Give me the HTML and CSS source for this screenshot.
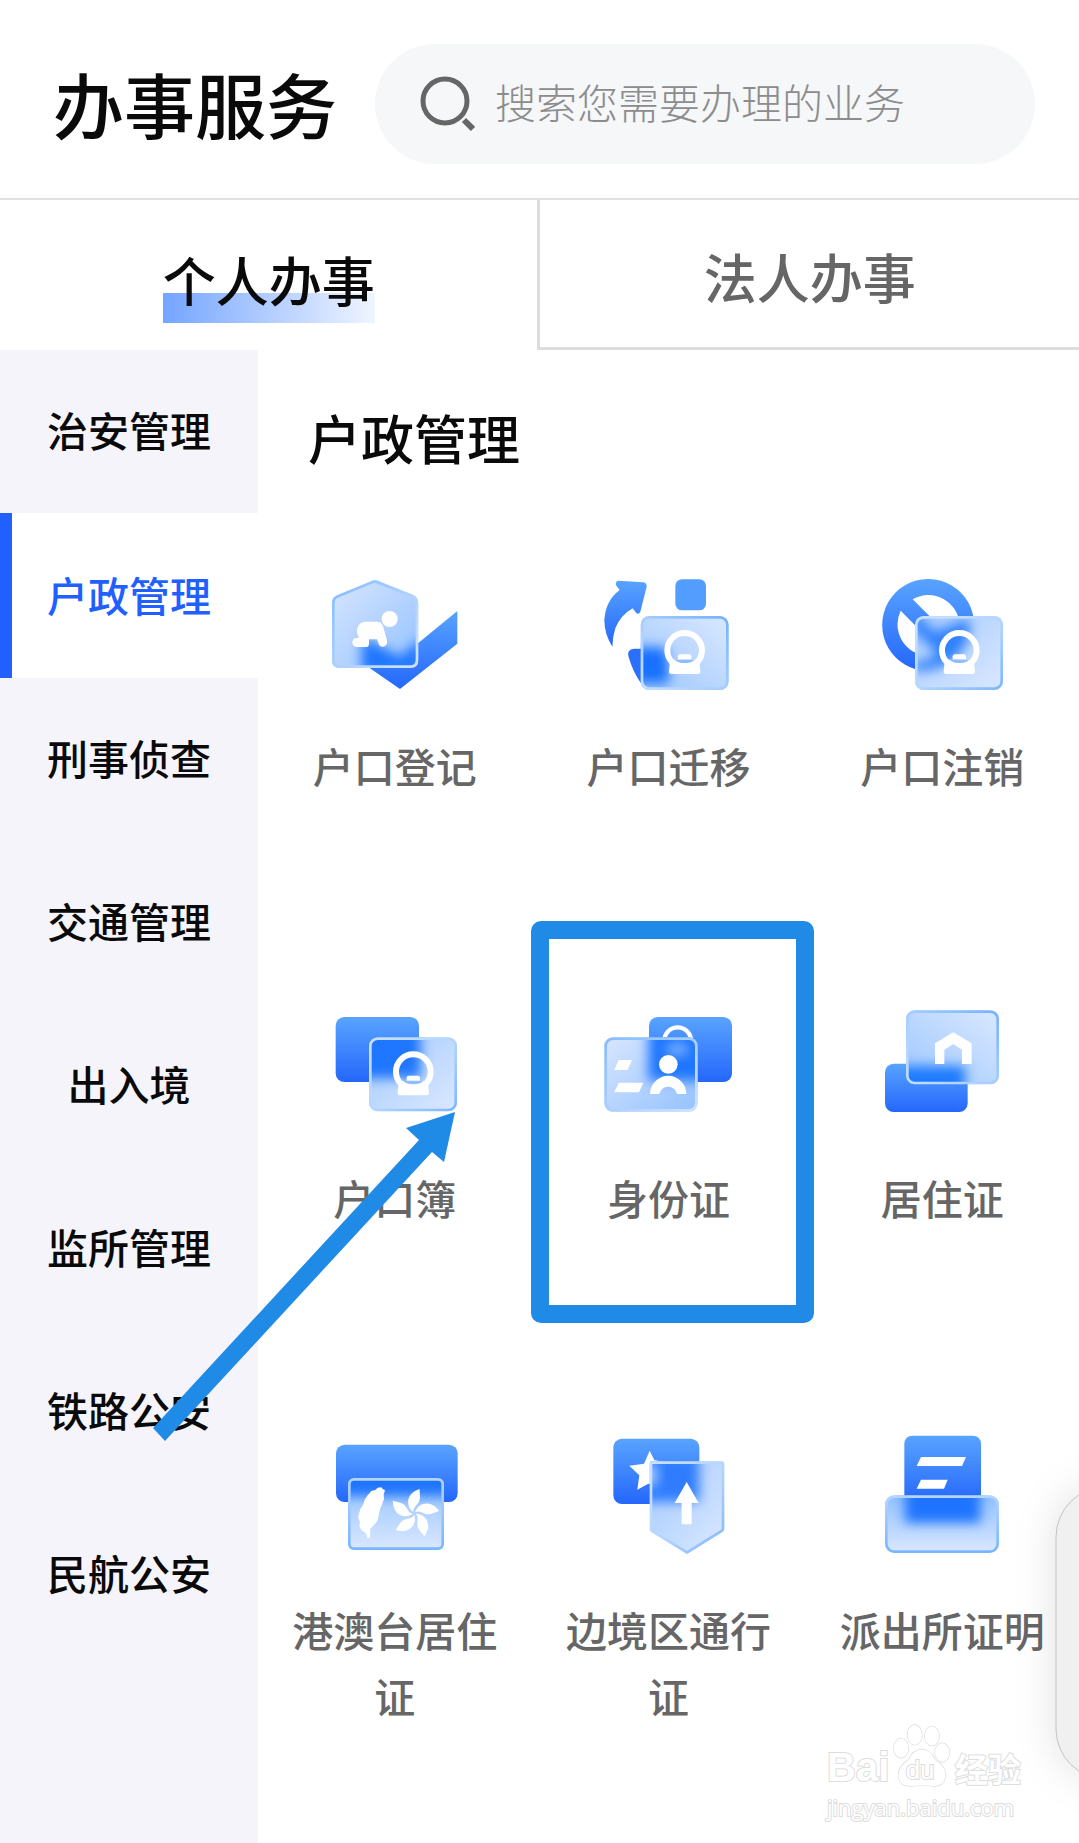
FILE: index.html
```html
<!DOCTYPE html>
<html lang="zh-CN">
<head>
    <meta charset="UTF-8">
    <meta name="viewport" content="width=device-width, initial-scale=1.0">
    <title>办事服务</title>
    <link rel="stylesheet" href="styles.css">
</head>
<body>
    <!-- Shared icon parts -->
    <svg class="defs" aria-hidden="true">
        <defs>
            <linearGradient id="solid" x1="0" y1="0" x2="0" y2="1">
                <stop offset="0" stop-color="#59a3ff"/>
                <stop offset="1" stop-color="#2467fb"/>
            </linearGradient>
            <linearGradient id="glassR" x1="0" y1="1" x2="1" y2="0">
                <stop offset="0" stop-color="#9cc7ff"/>
                <stop offset="1" stop-color="#dbe8ff"/>
            </linearGradient>
            <linearGradient id="glassD" x1="0" y1="0" x2="1" y2="1">
                <stop offset="0" stop-color="#a3caff"/>
                <stop offset="1" stop-color="#dbe8ff"/>
            </linearGradient>
            <linearGradient id="glassL" x1="0" y1="0" x2="1" y2="1">
                <stop offset="0" stop-color="#d8e6ff"/>
                <stop offset="1" stop-color="#94c2ff"/>
            </linearGradient>
            <linearGradient id="glassB" x1="0" y1="0" x2="0" y2="1">
                <stop offset="0" stop-color="#8fc0ff"/>
                <stop offset="1" stop-color="#dbe8ff"/>
            </linearGradient>
            <linearGradient id="edgeD" x1="0" y1="0" x2="1" y2="1">
                <stop offset="0" stop-color="#c9e0ff"/>
                <stop offset="0.5" stop-color="#b5d6ff"/>
                <stop offset="1" stop-color="#7db7ff"/>
            </linearGradient>
            <linearGradient id="edgeU" x1="0" y1="1" x2="1" y2="0">
                <stop offset="0" stop-color="#c4ddff"/>
                <stop offset="0.5" stop-color="#a5cdff"/>
                <stop offset="1" stop-color="#75b3ff"/>
            </linearGradient>
            <linearGradient id="edgeL" x1="0" y1="0" x2="1" y2="1">
                <stop offset="0" stop-color="#85bcff"/>
                <stop offset="1" stop-color="#cfe3ff"/>
            </linearGradient>
            <linearGradient id="edgeB" x1="0" y1="0" x2="0" y2="1">
                <stop offset="0" stop-color="#b5d4ff"/>
                <stop offset="1" stop-color="#78b6ff"/>
            </linearGradient>
            <filter id="blur" x="-50%" y="-50%" width="200%" height="200%" color-interpolation-filters="sRGB">
                <feGaussianBlur stdDeviation="18"/>
            </filter>
            <g id="portrait">
                <circle r="52" fill="none" stroke="#fff" stroke-width="18"/>
                <path d="M-43 28H43L47 62Q48 71 39 71H-39Q-48 71-47 62Z" fill="#fff"/>
                <path d="M-30 28H30Q20 38 0 38T-30 28Z" fill="#8fbcff"/>
                <path d="M-20 27V18Q-20 12-13 12H13Q20 12 20 18V27Z" fill="#fff"/>
            </g>
        </defs>
    </svg>

    <header class="header">
        <h1>办事服务</h1>
        <label class="search">
            <svg class="search-icon" viewBox="0 0 60 60" aria-hidden="true">
                <circle cx="30" cy="27" r="22" fill="none" stroke="#666" stroke-width="5"/>
                <path d="M49 46L58 55" stroke="#666" stroke-width="6"/>
            </svg>
            <input type="text" placeholder="搜索您需要办理的业务" aria-label="搜索">
        </label>
    </header>

    <nav class="tabs">
        <button class="tab active"><span>个人办事</span></button>
        <button class="tab"><span>法人办事</span></button>
    </nav>

    <div class="body">
        <nav class="sidebar">
            <a href="#">治安管理</a>
            <a href="#" class="active">户政管理</a>
            <a href="#">刑事侦查</a>
            <a href="#">交通管理</a>
            <a href="#">出入境</a>
            <a href="#">监所管理</a>
            <a href="#">铁路公安</a>
            <a href="#">民航公安</a>
        </nav>

        <main class="content">
            <h2>户政管理</h2>
            <div class="grid">
                <a href="#" class="item">
                    <svg viewBox="0 0 510 450">
                        <clipPath id="c1"><path d="M66 130Q66 112 82 106L182 64Q195 58 208 64L308 104Q325 112 325 130V300Q325 324 301 324H90Q66 324 66 300Z"/></clipPath>
                        <path d="M180 325L270 387L442 251V153L270 294L225 264Z" fill="url(#solid)"/>
                        <g clip-path="url(#c1)">
                            <path d="M66 50H326V324H66Z" fill="url(#glassL)"/>
                            <path d="M155 235L195 250L270 290L335 235V340H155Z" fill="#1f76ff" filter="url(#blur)"/>
                        </g>
                        <path d="M70 130Q70 114 84 109L184 68Q195 62 206 68L306 108Q321 114 321 130V300Q321 320 301 320H90Q70 320 70 300Z" fill="none" stroke="url(#edgeL)" stroke-width="8"/>
                        <circle cx="239" cy="177" r="24" fill="#fff"/>
                        <path d="M167 185H203Q215 186 219 199L231 241Q234 256 220 260Q208 261 205 249L201 238H177V251Q177 261 167 261H139Q127 259 127 247Q128 234 141 233H147Q138 218 142 204Q149 185 167 185Z" fill="#fff"/>
                    </svg>
                    <span>户口登记</span>
                </a>
                <a href="#" class="item">
                    <svg viewBox="-21 0 510 450">
                        <clipPath id="c2"><rect x="152" y="168" width="264" height="222" rx="26"/></clipPath>
                        <path d="M84 62L160 67Q171 69 170 80L151 155Q146 166 138 158L128 145Q91 166 76 205Q68 230 67 260Q43 222 43 180Q47 121 89 90L78 76Q75 66 84 62Z" fill="url(#solid)"/>
                        <rect x="256" y="58" width="92" height="93" rx="20" fill="#539dff"/>
                        <path d="M160 266H132Q109 268 116 291Q128 335 155 373H180Z" fill="#2b70fa"/>
                        <g clip-path="url(#c2)">
                            <rect x="152" y="168" width="264" height="222" fill="url(#glassR)"/>
                            <path d="M120 262H225Q240 310 235 370H120Z" fill="#1870ff" filter="url(#blur)"/>
                        </g>
                        <rect x="156" y="172" width="256" height="214" rx="22" fill="none" stroke="url(#edgeU)" stroke-width="8"/>
                        <use href="#portrait" x="284" y="271"/>
                    </svg>
                    <span>户口迁移</span>
                </a>
                <a href="#" class="item">
                    <svg viewBox="-24 0 510 450">
                        <clipPath id="c3"><rect x="150" y="168" width="264" height="222" rx="26"/></clipPath>
                        <path fill-rule="evenodd" d="M190 57A138 138 0 1 1 189 57ZM143 118L266 241Q284 218 284 195A94 94 0 0 0 143 118ZM107 152A94 94 0 0 0 232 278Z" fill="url(#solid)"/>
                        <g clip-path="url(#c3)">
                            <rect x="150" y="168" width="264" height="222" fill="url(#glassD)"/>
                            <path d="M140 150L210 215L310 175Q325 240 278 285Q230 340 140 330V305Q185 310 215 280L140 205Z" fill="#2f80ff" filter="url(#blur)"/>
                        </g>
                        <rect x="154" y="172" width="256" height="214" rx="22" fill="none" stroke="url(#edgeD)" stroke-width="8"/>
                        <use href="#portrait" x="283" y="271"/>
                    </svg>
                    <span>户口注销</span>
                </a>

                <a href="#" class="item">
                    <svg viewBox="-30 -24 510 450">
                        <clipPath id="c4"><rect x="147" y="112" width="264" height="222" rx="26"/></clipPath>
                        <rect x="47" y="51" width="250" height="195" rx="26" fill="url(#solid)"/>
                        <g clip-path="url(#c4)">
                            <rect x="147" y="112" width="264" height="222" fill="url(#glassD)"/>
                            <path d="M90 60H302V235H90Z" fill="#1f76ff" filter="url(#blur)"/>
                        </g>
                        <rect x="151" y="116" width="256" height="214" rx="22" fill="none" stroke="url(#edgeD)" stroke-width="8"/>
                        <use href="#portrait" x="280" y="215"/>
                    </svg>
                    <span>户口簿</span>
                </a>
                <a href="#" class="item marked">
                    <svg viewBox="189 246 510 450">
                        <clipPath id="c5"><rect x="253" y="382" width="280" height="223" rx="26"/></clipPath>
                        <rect x="387" y="321" width="249" height="195" rx="26" fill="url(#solid)"/>
                        <path d="M433 392A40 40 0 0 1 513 392" fill="none" stroke="#fff" stroke-width="13"/>
                        <g clip-path="url(#c5)">
                            <rect x="253" y="382" width="280" height="223" fill="url(#glassL)"/>
                            <path d="M385 350H570V512H385Z" fill="#1f76ff" filter="url(#blur)"/>
                            <ellipse cx="472" cy="418" rx="34" ry="20" fill="#7db2ff" filter="url(#blur)"/>
                        </g>
                        <rect x="257" y="386" width="272" height="215" rx="22" fill="none" stroke="url(#edgeL)" stroke-width="8"/>
                        <path d="M296 450H336L323 480H283ZM296 518H370L357 547H283Z" fill="#fff"/>
                        <circle cx="445" cy="463" r="28" fill="#fff"/>
                        <path d="M390 552A54 54 0 0 1 499 552H471A27 27 0 0 0 418 552Z" fill="#fff"/>
                    </svg>
                    <span>身份证</span>
                </a>
                <a href="#" class="item">
                    <svg viewBox="-24 -24 510 450">
                        <clipPath id="c6"><rect x="123" y="31" width="279" height="222" rx="26"/></clipPath>
                        <rect x="60" y="191" width="248" height="145" rx="26" fill="url(#solid)"/>
                        <g clip-path="url(#c6)">
                            <rect x="123" y="31" width="279" height="222" fill="url(#glassR)"/>
                            <path d="M60 198H300V310H60Z" fill="#1f7bff" filter="url(#blur)"/>
                        </g>
                        <rect x="127" y="35" width="271" height="214" rx="22" fill="none" stroke="url(#edgeU)" stroke-width="8"/>
                        <path d="M210 192V130L265 97L320 130V192H291V149L265 132L238 149V192Z" fill="#fff"/>
                    </svg>
                    <span>居住证</span>
                </a>

                <a href="#" class="item">
                    <svg viewBox="-30 -18 510 450">
                        <clipPath id="c7"><rect x="84" y="144" width="288" height="216" rx="18"/></clipPath>
                        <rect x="48" y="44" width="365" height="172" rx="26" fill="url(#solid)"/>
                        <g clip-path="url(#c7)">
                            <rect x="84" y="144" width="288" height="216" fill="url(#glassB)"/>
                            <path d="M30 80H430V198H30Z" fill="#1f74ff" filter="url(#blur)"/>
                        </g>
                        <rect x="88" y="148" width="280" height="208" rx="14" fill="none" stroke="url(#edgeB)" stroke-width="8"/>
                        <path d="M173 173L184 172L188 177L195 181L191 194L192 207L185 227L180 237L177 252L173 271L163 284L151 296L150 324H143L137 309L124 300L118 286L120 276L114 262L121 238L129 224L135 208L143 196L154 183L166 180Z" fill="#fff"/>
                        <g fill="#fff">
                            <path id="petal" d="M280 246C256 228 258 190 299 177C298 190 303 202 297 215C289 228 279 232 280 246Z"/>
                            <use href="#petal" transform="rotate(72 283 250)"/>
                            <use href="#petal" transform="rotate(144 283 250)"/>
                            <use href="#petal" transform="rotate(216 283 250)"/>
                            <use href="#petal" transform="rotate(288 283 250)"/>
                        </g>
                    </svg>
                    <span>港澳台居住证</span>
                </a>
                <a href="#" class="item">
                    <svg viewBox="-36 -3 510 450">
                        <clipPath id="c8"><path d="M172 109H381Q388 109 388 116V311Q388 316 383 320L276 387L168 320Q164 317 164 311V116Q164 109 172 109Z"/></clipPath>
                        <rect x="55" y="41" width="258" height="196" rx="26" fill="url(#solid)"/>
                        <path d="M164 77L178 105L205 111L185 134L188 180L160 176L127 194L133 151L103 122L147 116Z" fill="#fff"/>
                        <g clip-path="url(#c8)">
                            <path d="M164 109H388V387H164Z" fill="url(#glassD)"/>
                            <path d="M130 90H312V230H130Z" fill="#2f7cff" filter="url(#blur)"/>
                            <ellipse cx="165" cy="150" rx="24" ry="36" fill="#a5cbff" filter="url(#blur)"/>
                        </g>
                        <path d="M172 113H380Q384 113 384 117V311Q384 315 380 318L276 382L171 318Q168 315 168 311V117Q168 113 172 113Z" fill="none" stroke="url(#edgeD)" stroke-width="8"/>
                        <path d="M275 171L311 234H290V298H260V234H239Z" fill="#fff"/>
                    </svg>
                    <span>边境区通行证</span>
                </a>
                <a href="#" class="item">
                    <svg viewBox="-24 12 510 450">
                        <clipPath id="c9"><rect x="60" y="226" width="342" height="173" rx="28"/></clipPath>
                        <path d="M118 250V73Q118 47 144 47H322Q348 47 348 73V250Z" fill="url(#solid)"/>
                        <path d="M168 111H303L291 138H155ZM168 179H248L237 206H155Z" fill="#fff"/>
                        <g clip-path="url(#c9)">
                            <rect x="60" y="226" width="342" height="173" fill="url(#glassB)"/>
                            <path d="M120 190H346V308H120Z" fill="#1f74ff" filter="url(#blur)"/>
                        </g>
                        <rect x="64" y="230" width="334" height="165" rx="24" fill="none" stroke="url(#edgeB)" stroke-width="8"/>
                    </svg>
                    <span>派出所证明</span>
                </a>
            </div>
        </main>
    </div>

    <svg class="arrow" viewBox="150 1110 310 332" aria-hidden="true">
        <path d="M152 1427L418 1139L405 1127L454 1111L443 1161L431 1151L164 1440Z" fill="#208be7"/>
    </svg>

    <!-- Side panel, mostly off the right edge -->
    <svg class="side-panel" viewBox="0 0 83 420" aria-hidden="true">
        <filter id="soft" x="-100%" y="-30%" width="300%" height="160%">
            <feGaussianBlur stdDeviation="20"/>
        </filter>
        <rect x="60" y="64" width="103" height="292" rx="50" fill="#000" fill-opacity="0.12" filter="url(#soft)"/>
        <rect x="60" y="64" width="103" height="292" rx="50" fill="#f0f0f0" stroke="#c4c4c4"/>
    </svg>

    <div class="watermark">
        <div class="wm-logo">
            <span class="wm-bai">Bai</span>
            <span class="wm-paw">
                <svg viewBox="0 0 174 190" aria-hidden="true">
                    <g fill="#fff" stroke="#ddd" stroke-width="4">
                        <ellipse cx="24" cy="73" rx="22" ry="29"/>
                        <ellipse cx="65" cy="33" rx="22" ry="30"/>
                        <ellipse cx="117" cy="36" rx="22" ry="29"/>
                        <ellipse cx="148" cy="86" rx="22" ry="28"/>
                        <path d="M85 77Q112 77 126 108Q158 127 158 155Q155 188 122 187Q87 182 54 187Q17 188 16 155Q16 127 46 109Q60 77 85 77Z"/>
                    </g>
                </svg>
                <span>du</span>
            </span>
            <span class="wm-cn">经验</span>
        </div>
        <div class="wm-url">jingyan.baidu.com</div>
    </div>
</body>
</html>
```

FILE: styles.css
```css
*, *::after { box-sizing: border-box; }

body {
    position: relative;
    display: flex;
    flex-direction: column;
    min-height: 100vh;
    margin: 0;
    background: #fff;
    color: #0a0a0a;
    font-family: "Noto Sans CJK SC", sans-serif;
    font-weight: 500;
}

a { color: inherit; text-decoration: none; }

.defs { position: absolute; width: 0; height: 0; }

/* Header */
.header {
    display: flex;
    align-items: center;
    gap: 38px;
    padding: 44px 44px 34px 53px;
    border-bottom: 2px solid #e0e0e0;
}
h1 { margin: 0; padding-bottom: 4px; font-size: 71px; line-height: 116px; font-weight: 500; white-space: nowrap; }
.search {
    display: flex;
    flex: 1;
    align-items: center;
    gap: 20px;
    height: 120px;
    padding: 0 40px;
    border-radius: 60px;
    background: #f5f7f9;
}
.search-icon { flex: none; width: 60px; height: 60px; }
.search input {
    flex: 1;
    min-width: 0;
    padding: 0 0 6px;
    border: none;
    outline: none;
    background: none;
    font: 300 41px "Noto Sans CJK SC", sans-serif;
}
.search input::placeholder { color: #8c8c8c; opacity: 1; }

/* Tabs */
.tabs { display: flex; height: 150px; }
.tab {
    flex: 1;
    padding: 4px 0 0;
    border: solid #ddd;
    border-width: 0 0 3px 3px;
    background: none;
    color: #666;
    font: 500 53px "Noto Sans CJK SC", sans-serif;
}
.tab span { display: inline-block; line-height: 80px; }
.tab.active {
    flex: 0 0 49.8%;
    padding: 11px 0 0;
    border: none;
    color: #0a0a0a;
}
.tab.active span { background: linear-gradient(90deg, #75a5ff, #f0f5ff) 0 100% / 100% 30px no-repeat; padding-bottom: 4px; }

/* Body */
.body { display: flex; flex: 1; }
.sidebar { flex: none; width: 258px; background: #f4f4fa; }
.sidebar a {
    display: block;
    height: 163px;
    font-size: 41px;
    line-height: 159px;
    text-align: center;
}
.sidebar .active {
    height: 165px;
    background: linear-gradient(#215fff, #215fff) 0 0 / 12px 100% no-repeat #fff;
    color: #215fff;
    line-height: 163px;
}

.content { flex: 1; padding-top: 42px; }
h2 { margin: 0 50px 78px; font-size: 53px; line-height: 90px; font-weight: 500; }
.grid { display: grid; grid-template-columns: repeat(3, 1fr); row-gap: 194px; }
.item {
    position: relative;
    display: flex;
    flex-direction: column;
    align-items: center;
    gap: 22px;
    padding: 0 32px;
    color: #666;
    font-size: 41px;
    line-height: 66px;
    text-align: center;
}
.item svg { width: 170px; height: 150px; }
.item.marked::after {
    content: "";
    position: absolute;
    top: -71px;
    left: -1px;
    width: 283px;
    height: 402px;
    border: 18px solid #208be7;
    border-radius: 10px;
}

/* Overlays */
.arrow { position: absolute; top: 1111px; left: 151px; width: 310px; height: 332px; }
.side-panel { position: absolute; top: 1423px; right: 0; width: 83px; height: 420px; }

.watermark {
    position: absolute;
    right: 58px;
    bottom: 20px;
    width: 194px;
    color: #fff;
    -webkit-text-stroke: 2px #ddd;
    paint-order: stroke fill;
}
.wm-logo { display: flex; align-items: flex-end; justify-content: space-between; height: 68px; padding-bottom: 4px; }
.wm-bai { font: 700 40px/40px "Liberation Sans", sans-serif; }
.wm-paw { position: relative; width: 58px; height: 63px; }
.wm-paw svg { display: block; width: 58px; height: 63px; }
.wm-paw span {
    position: absolute;
    right: 4px;
    bottom: 4px;
    left: 0;
    font: 26px/26px "Liberation Sans", sans-serif;
    text-align: center;
}
.wm-cn { font-size: 33px; line-height: 38px; font-weight: 700; }
.wm-url { font: 22px/32px "Open Sans", sans-serif; white-space: nowrap; }
```
